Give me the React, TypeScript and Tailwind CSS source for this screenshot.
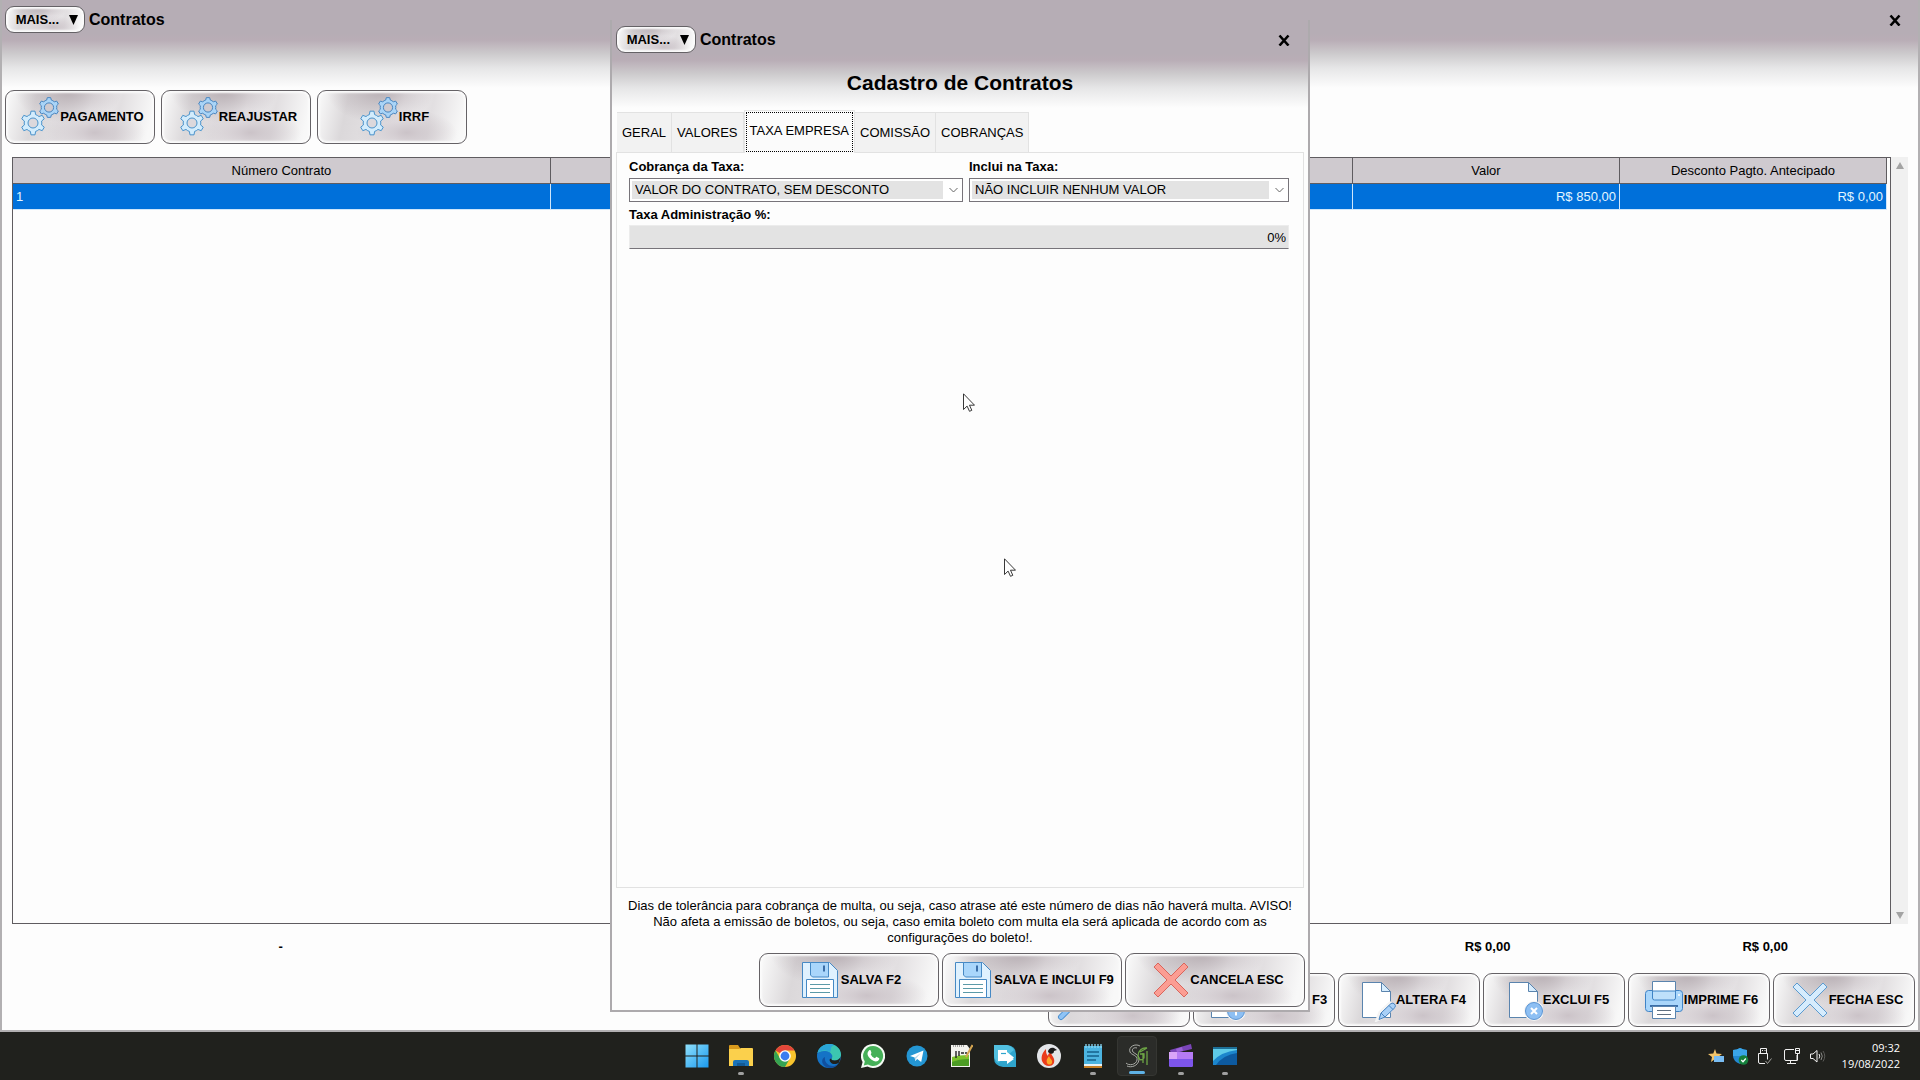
import { useState } from 'react'
import type { ReactNode } from 'react'

const silver =
  'bg-[radial-gradient(ellipse_at_42%_0%,#b8afb4_0%,transparent_44%),radial-gradient(ellipse_at_60%_80%,#cbc3c8_0%,transparent_40%),linear-gradient(102deg,#f8f8f8_2%,#dbd8da_20%,#e2dfe1_38%,#f0eef0_55%,#e2dfe1_74%,#f8f8f8_95%)]'

const headerFade =
  'bg-[linear-gradient(#b6adb5_0px,#b6adb5_34px,#b9adb6_40px,#cdcbcd_54px,#e6e6e7_68px,#fdfdfd_88px)]'

function gear(cx: number, cy: number, outer: number, inner: number) {
  const teeth = 6
  const pts: string[] = []
  for (let i = 0; i < teeth; i++) {
    const mid = (i / teeth) * Math.PI * 2 - Math.PI / 2
    const corners = [
      [-0.3, inner],
      [-0.17, outer],
      [0.17, outer],
      [0.3, inner],
      [0.52, inner],
    ]
    corners.forEach(([a, r]) => {
      pts.push(`${(cx + Math.cos(mid + a) * r).toFixed(2)},${(cy + Math.sin(mid + a) * r).toFixed(2)}`)
    })
  }
  return pts.join(' ')
}

function Icon({ children }: { children?: ReactNode }) {
  return (
    <svg className="size-11 shrink-0" viewBox="0 0 44 44" fill="none" aria-hidden="true">
      {children}
    </svg>
  )
}

function GearsIcon() {
  return (
    <Icon>
      <polygon points={gear(17, 28, 12, 8.8)} fill="#d3ecfc" stroke="#4a93cc" strokeLinejoin="round" />
      <circle cx="17" cy="28" r="5" fill="#dcd8dc" stroke="#4a93cc" />
      <polygon points={gear(33, 12.5, 10, 7.8)} fill="#a9d4f7" stroke="#4a86c0" strokeLinejoin="round" />
      <circle cx="33" cy="12.5" r="4.6" fill="#cfcacf" stroke="#4a86c0" />
    </Icon>
  )
}

function FloppyIcon() {
  return (
    <Icon>
      <path d="M5.500 4.500h27l8 8v27h-35z" fill="#dff1fe" stroke="#4689c4" />
      <path d="M13.500 4.500h18v14.500h-16l-2-2z" fill="#a9d6fb" stroke="#4689c4" />
      <path d="M27 7.500v6" stroke="#3b6ea8" strokeWidth="2" />
      <path d="M9.500 39.500v-18h27v18z" fill="#fff" stroke="#4689c4" />
      <path d="M13 26.500h20M13 30.500h20M13 34.500h20" stroke="#5b9aa8" />
    </Icon>
  )
}

function CrossIcon({ fill, stroke }: { fill: string; stroke: string }) {
  return (
    <Icon>
      <path
        d="M12 5L25 18 38 5l4 4L29 22 42 35l-4 4L25 26 12 39l-4-4L21 22 8 9z"
        fill={fill}
        stroke={stroke}
      />
    </Icon>
  )
}

function Sheet() {
  return (
    <>
      <path d="M10.500 4.500h19l9 9v26h-28z" fill="#fff" stroke="#5a84ae" />
      <path d="M29.500 4.500v9h9z" fill="#d8edfd" stroke="#5a84ae" />
    </>
  )
}

function EditIcon() {
  return (
    <Icon>
      <Sheet />
      <path d="M25 42l3-8L38 25l4 4-10 9.500z" fill="#a9d0f7" stroke="#f4f4f4" strokeWidth="3" />
      <path d="M27 41.500l2-6.500 10-9.500q2-1 3.500.5t.5 3.500L33 39z" fill="#a9d0f7" stroke="#4680bd" />
      <path d="M29 35l4 4M37 27.500l4 4" stroke="#4680bd" />
    </Icon>
  )
}

function BadgeIcon({ plus }: { plus?: boolean }) {
  return (
    <Icon>
      <Sheet />
      <circle cx="35" cy="33" r="9" fill="#86baf1" stroke="#f4f4f4" strokeWidth="2" />
      <circle cx="35" cy="33" r="8.500" fill="#8dbff3" stroke="#5a94d3" />
      <path
        d={plus ? 'M35 28.500v9M30.500 33h9' : 'M32 30l6 6M38 30l-6 6'}
        stroke="#fff"
        strokeWidth="2"
      />
    </Icon>
  )
}

function SearchIcon() {
  return (
    <Icon>
      <path d="M20 26L7 39" stroke="#4a8fd0" strokeWidth="6" strokeLinecap="round" />
      <path d="M20 26L7 39" stroke="#8fc3f5" strokeWidth="4" strokeLinecap="round" />
      <circle cx="28" cy="17" r="11" fill="#e4f3fe" stroke="#4a8fd0" strokeWidth="2" />
    </Icon>
  )
}

function PrinterIcon() {
  return (
    <Icon>
      <rect x="5.500" y="12.500" width="37" height="21" rx="3" fill="#a9d6fb" stroke="#3f83c6" />
      <path d="M12.500 3.500h23v10h-23z" fill="#fff" stroke="#5a84ae" />
      <path d="M12.500 13v7q0 2 2 2h19q2 0 2-2v-7z" fill="#bfe0fb" stroke="#3f83c6" />
      <path d="M10 28h28" stroke="#3b6ea8" strokeWidth="2" />
      <path d="M12.500 28.500h23v12h-23z" fill="#fff" stroke="#5a84ae" />
      <path d="M17 32.500h14M17 36.500h14" stroke="#5f6f80" />
      <circle cx="39" cy="17" r="1" fill="#fff" />
    </Icon>
  )
}

function ActionButton({ icon, label, size }: { icon: ReactNode; label: string; size: string }) {
  return (
    <button
      type="button"
      className={`${size} ${silver} flex h-[54px] items-center justify-center whitespace-nowrap rounded-[9px] border border-[#656266] text-[13px] font-bold leading-4 text-black shadow-[inset_0_0_2px_2px_#fbfbfb]`}
    >
      {icon}
      <span>{label}</span>
    </button>
  )
}

function TitleBar() {
  return (
    <div className="flex h-[38px] shrink-0 items-start justify-between pr-2 pt-[6px]">
      <div className="flex items-center gap-1">
        <button
          type="button"
          className={`${silver} flex h-[27px] w-20 items-center justify-end gap-[10px] rounded-[9px] border border-[#656266] pr-[6px] text-[13px] font-bold leading-4 shadow-[inset_0_0_2px_2px_#fbfbfb]`}
        >
          MAIS...
          <svg className="h-[10px] w-[9px]" viewBox="0 0 9 10" aria-hidden="true">
            <path d="M0 0h9L4.500 10z" fill="#000" />
          </svg>
        </button>
        <span className="text-base font-bold leading-5">Contratos</span>
      </div>
      <button type="button" aria-label="Fechar" className="flex h-7 w-6 items-center justify-center">
        <svg className="size-3" viewBox="0 0 12 12" fill="none" stroke="#000" strokeWidth="2.600">
          <path d="M1.500 1.500l9 10M10.500 1.500l-9 10" />
        </svg>
      </button>
    </div>
  )
}

const toolbar = ['PAGAMENTO', 'REAJUSTAR', 'IRRF']

const actions = [
  { label: 'PESQUISA F2', icon: <SearchIcon /> },
  { label: 'ADICIONA F3', icon: <BadgeIcon plus /> },
  { label: 'ALTERA F4', icon: <EditIcon /> },
  { label: 'EXCLUI F5', icon: <BadgeIcon /> },
  { label: 'IMPRIME F6', icon: <PrinterIcon /> },
  { label: 'FECHA ESC', icon: <CrossIcon fill="#d6ecfd" stroke="#5b9bd0" /> },
]

const th = 'border-b border-r border-[#5f5c60] font-normal'
const td = 'border-b border-r border-[#cfe6fb]'

function ContractsWindow() {
  return (
    <main
      className={`${headerFade} flex min-h-0 flex-1 flex-col border-x-2 border-b-2 border-[#b2b0b2] px-[3px] pb-[3px]`}
    >
      <TitleBar />
      <div className="mt-[52px] flex shrink-0 gap-[6px]">
        {toolbar.map((t) => (
          <ActionButton key={t} label={t} icon={<GearsIcon />} size="w-[150px]" />
        ))}
      </div>

      <div className="mx-[7px] mt-[13px] flex min-h-0 flex-1">
        <div className="min-w-0 flex-1 border border-[#5f5c60] pr-[3px]">
          <table className="w-full table-fixed border-separate border-spacing-0 text-[13px] leading-4">
            <colgroup>
              <col className="w-[28.7%]" />
              <col />
              <col className="w-[14.25%]" />
              <col className="w-[14.25%]" />
            </colgroup>
            <thead>
              <tr className="h-[26px] bg-[#cfcacf]">
                <th className={th}>Número Contrato</th>
                <th className={th} />
                <th className={th}>Valor</th>
                <th className={th}>Desconto Pagto. Antecipado</th>
              </tr>
            </thead>
            <tbody>
              <tr className="h-[26px] bg-[#0070da] text-[#e4f6ff]">
                <td className={`${td} pl-[3px]`}>1</td>
                <td className={td} />
                <td className={`${td} pr-[3px] text-right`}>R$ 850,00</td>
                <td className={`${td} pr-[3px] text-right`}>R$ 0,00</td>
              </tr>
            </tbody>
          </table>
        </div>
        <div className="flex w-[17px] flex-col items-center justify-between bg-[#f0f0f0] py-[5px]">
          <svg className="h-[7px] w-2" viewBox="0 0 8 7" aria-hidden="true">
            <path d="M4 0l4 7H0z" fill="#a3a3a3" />
          </svg>
          <svg className="h-[7px] w-2" viewBox="0 0 8 7" aria-hidden="true">
            <path d="M4 7L0 0h8z" fill="#a3a3a3" />
          </svg>
        </div>
      </div>

      <div className="mx-[6px] grid h-[49px] shrink-0 grid-cols-[538fr_802fr_267fr_287fr] pt-[15px] text-center text-[13px] font-bold leading-4">
        <span>-</span>
        <span />
        <span>R$ 0,00</span>
        <span>R$ 0,00</span>
      </div>

      <div className="flex shrink-0 justify-end gap-[3px]">
        {actions.map((a) => (
          <ActionButton key={a.label} label={a.label} icon={a.icon} size="w-[142px]" />
        ))}
      </div>
    </main>
  )
}

function SelectBox({ id, label, value }: { id: string; label: string; value: string }) {
  return (
    <div>
      <label htmlFor={id} className="block text-[13px] font-bold leading-5">
        {label}
      </label>
      <div className="relative mt-px border border-[#77747a] bg-white py-[2px] pl-[2px] pr-[19px]">
        <select
          id={id}
          defaultValue={value}
          className="block h-[18px] w-full appearance-none bg-[#e3e3e3] pl-[3px] text-[13px] leading-[18px] outline-none"
        >
          <option value={value}>{value}</option>
        </select>
        <svg
          className="pointer-events-none absolute right-1 top-2 h-[6px] w-[9px]"
          viewBox="0 0 9 6"
          fill="none"
          stroke="#666"
        >
          <path d="M.5 1l4 4 4-4" />
        </svg>
      </div>
    </div>
  )
}

function Pointer({ place }: { place: string }) {
  return (
    <svg className={`absolute ${place} h-[19px] w-3`} viewBox="0 0 12 19" aria-hidden="true">
      <path
        d="M.5.8v15.700l3.600-3.400 2.400 5.200 2.300-1-2.300-5.100h5z"
        fill="#fff"
        stroke="#222"
        strokeWidth=".9"
      />
    </svg>
  )
}

const tabs = ['GERAL', 'VALORES', 'TAXA EMPRESA', 'COMISSÃO', 'COBRANÇAS']

function ContractDialog() {
  const [active, setActive] = useState('TAXA EMPRESA')

  return (
    <section
      role="dialog"
      aria-label="Cadastro de Contratos"
      className={`${headerFade} absolute inset-x-0 bottom-[68px] top-5 mx-auto flex w-[700px] max-w-full flex-col border-x-2 border-b-2 border-[#adaaad] bg-[#fdfdfd] px-1 pb-[3px]`}
    >
      <TitleBar />
      <h1 className="text-center text-[21px] font-bold leading-[49px]">Cadastro de Contratos</h1>

      <div role="tablist" className="flex h-[45px] shrink-0 items-end pl-px text-[13px] leading-4">
        {tabs.map((t) => (
          <button
            key={t}
            type="button"
            role="tab"
            aria-selected={t === active}
            onClick={() => setActive(t)}
            className={
              t === active
                ? 'relative top-px h-[43px] border border-b-0 border-[#e6e6e6] bg-[#fbfbfb] p-px'
                : 'h-10 border-r border-t border-[#e2e2e2] bg-[#f2f2f2] px-[5px]'
            }
          >
            {t === active ? (
              <span className="flex h-full items-center border border-dotted border-black px-[3px] pb-[2px]">{t}</span>
            ) : (
              t
            )}
          </button>
        ))}
      </div>

      <div className="min-h-0 flex-1 border border-[#e2e2e2] pl-3 pr-[14px] pt-1">
        <div className="grid grid-cols-[334fr_320fr] gap-[6px]">
          <SelectBox id="cobranca" label="Cobrança da Taxa:" value="VALOR DO CONTRATO, SEM DESCONTO" />
          <SelectBox id="inclui" label="Inclui na Taxa:" value="NÃO INCLUIR NENHUM VALOR" />
        </div>
        <label htmlFor="taxa" className="mt-[3px] block text-[13px] font-bold leading-5">
          Taxa Administração %:
        </label>
        <input
          id="taxa"
          defaultValue="0%"
          className="block h-6 w-full border border-[#ececec] border-b-[#77747a] bg-[#e3e3e3] pr-[2px] text-right text-[13px] leading-4 outline-none"
        />
      </div>

      <p className="shrink-0 px-2 pb-[7px] pt-[10px] text-center text-[13px] leading-4">
        Dias de tolerância para cobrança de multa, ou seja, caso atrase até este número de dias não haverá multa. AVISO!
        Não afeta a emissão de boletos, ou seja, caso emita boleto com multa ela será aplicada de acordo com as
        configurações do boleto!.
      </p>

      <div className="-mr-px flex shrink-0 justify-end gap-[3px]">
        <ActionButton label="SALVA F2" icon={<FloppyIcon />} size="w-[180px]" />
        <ActionButton label="SALVA E INCLUI F9" icon={<FloppyIcon />} size="w-[180px]" />
        <ActionButton
          label="CANCELA ESC"
          icon={<CrossIcon fill="#fb9d93" stroke="#d9655b" />}
          size="w-[180px]"
        />
      </div>

      <Pointer place="left-[351px] top-[373px]" />
      <Pointer place="left-[392px] top-[538px]" />
    </section>
  )
}

const apps: { name: string; state?: 'open' | 'active'; art: ReactNode }[] = [
  {
    name: 'Iniciar',
    art: (
      <>
        <defs>
          <linearGradient id="win" x1="0" y1="0" x2="1" y2="1">
            <stop offset="0" stopColor="#8fe0fb" />
            <stop offset="1" stopColor="#1a9af0" />
          </linearGradient>
        </defs>
        <path d="M.5.5h11v11H.5zM12.500.5h11v11h-11zM.5 12.500h11v11H.5zM12.500 12.500h11v11h-11z" fill="url(#win)" />
      </>
    ),
  },
  {
    name: 'Explorador de Arquivos',
    state: 'open',
    art: (
      <>
        <path d="M0 2q0-1 1-1h8l2 3v6H0z" fill="#d99a1c" />
        <path d="M0 5h10l2-1h11q1 0 1 1v17H0z" fill="#fbd04c" />
        <path d="M4 22v-4q0-2 2-2h12q2 0 2 2v4z" fill="#1a72b8" />
        <path d="M8 22v-3h8v3z" fill="#135a96" />
      </>
    ),
  },
  {
    name: 'Chrome',
    art: (
      <>
        <circle cx="12" cy="12" r="11" fill="#f9c52d" />
        <path d="M12 12L2.470 6.500A11 11 0 0 1 21.530 6.500H12z" fill="#e2463a" />
        <path d="M2.470 6.500A11 11 0 0 0 12 23l4.700-8.200L12 12 7.300 14.800z" fill="#35a453" />
        <circle cx="12" cy="12" r="5.800" fill="#fff" />
        <circle cx="12" cy="12" r="4.400" fill="#3a7df0" />
      </>
    ),
  },
  {
    name: 'Edge',
    art: (
      <>
        <circle cx="12" cy="12" r="12" fill="#1573c6" />
        <path d="M.5 9C2 3.500 6.500 0 12 0c7 0 12 5 12 10.500 0 4-3 6-6.500 6-2.500 0-3.500-1-3-2 1-1 1-2.500.5-3.500C13.500 7.500 10 6.500 7 7 4 7.300 1.500 8 .5 9z" fill="#3cc6b0" />
        <path d="M.5 9C2 3.500 6.500 0 12 0c2 0 4 .5 5.500 1.300C12 2 15 7 13 8 9 5.500 3 6 .5 9z" fill="#2aa6d8" />
        <path d="M8 13c-1 5 3 9 8 9 2.500 0 4-1 5.500-2.500C19 24 13 25 9 23c-5-3-5-8-1-10z" fill="#114f9e" />
        <path d="M24 12c-1 3-4 4.500-6.500 4.500-2.500 0-3.500-1-3-2-1.500 0-2.500 1-1.500 3 1.500 3 6 3.500 9 1z" fill="#20211d" />
      </>
    ),
  },
  {
    name: 'WhatsApp',
    art: (
      <>
        <path d="M12 0a12 12 0 1 1-5.500 22.600L0 24l1.600-6A12 12 0 0 1 12 0z" fill="#f4faf4" />
        <path d="M12 2a10 10 0 1 1-5 18.600L2.800 21.500l1-4A10 10 0 0 1 12 2z" fill="#45b058" />
        <path d="M8 6.500c1-.8 1.500-.3 2 1 .7 1.600.5 1.700-.3 2.800 1 2 2 3 4.200 4 1-1 1.300-1.800 2-1.400 2.600 1.200 2.700 1.300 2.200 2.600-.8 1.900-3.300 2.300-5.200 1.500C9.500 15.700 7.600 13.300 6.700 11 6.200 9.300 6.800 7.500 8 6.500z" fill="#fff" />
      </>
    ),
  },
  {
    name: 'Telegram',
    art: (
      <>
        <circle cx="12" cy="12" r="10.500" fill="#2496d3" />
        <path d="M5 12l13.500-5.500-2.300 11.500-4-3-2 2-.5-3.500z" fill="#fff" />
        <path d="M9.700 13.500l6-4.500-4.500 5.500-1 2.500z" fill="#b9d9ec" />
      </>
    ),
  },
  {
    name: 'Notepad++',
    art: (
      <>
        <path d="M2 1h16l3 4v18H2z" fill="#f3f3ee" />
        <path d="M3 13q6-2 17-2v11H3z" fill="#7cc32c" />
        <path d="M3 18q7-3 17-3v7H3z" fill="#4c9c24" />
        <path d="M7 7v7M10 7v5M12 9h3M16 9h2" stroke="#222" strokeWidth="1.400" />
        <path d="M23.500 1L17 13" stroke="#d3a450" strokeWidth="2" />
        <path d="M4 2h12" stroke="#555" strokeDasharray="1 1" />
      </>
    ),
  },
  {
    name: 'TeamShare',
    art: (
      <>
        <path d="M1 1h13q9 1 9 9v13H10Q1 22 1 14z" fill="#2fa5cd" />
        <path d="M1 1h13q5 1 7 5L5 19Q1 16 1 10z" fill="#52c0e0" />
        <path d="M5 6h9v4H8v4h6v-3l7 4-7 5v-3H5z" fill="#fff" />
        <path d="M8 10h6V8l7 5.500-7 5V16H8z" fill="#fff" />
        <path d="M8 9.500h5" stroke="#2fa5cd" strokeWidth="1.200" />
      </>
    ),
  },
  {
    name: 'Firebird',
    art: (
      <>
        <circle cx="12" cy="12" r="12" fill="#e3e5e8" />
        <path d="M9 5c-4 4-5 8-4 12 1 3 4 5 7 5 4 0 6-3 5-7-1-3-3-4-3-7-2 1-3 2-3 4-2-2-2-4-2-7z" fill="#ea3c1c" />
        <path d="M12 12c-2 3-3 4-2 7 1 2 4 2 5 0 1-3-2-4-3-7z" fill="#fba829" />
        <path d="M11 8c0-3 3-5 6-4l3 2-3 1c0 3-3 4-6 1z" fill="#1a1a1a" />
      </>
    ),
  },
  {
    name: 'Bloco de Notas',
    state: 'open',
    art: (
      <>
        <path d="M3 2h18v18H3z" fill="#4cb4e0" />
        <path d="M3 20h18v2H3z" fill="#e8f2f6" />
        <path d="M3 22h18v2H3z" fill="#c77f24" />
        <path d="M5 0v4M8 0v4M11 0v4M14 0v4M17 0v4M20 0v4" stroke="#8ad6f2" strokeWidth="1.300" />
        <path d="M6 8h12M6 12h12M6 16h9" stroke="#14608a" strokeWidth="1.600" />
      </>
    ),
  },
  {
    name: 'Sistema',
    state: 'active',
    art: (
      <>
        <path d="M15 2C10-1 3 3 5 8c1 3 8 3 7 8-1 5-8 6-11 3M12 4C9 3 6 5 8 8c2 2 7 3 6 8-1 6-8 8-12 6" stroke="#a9aba6" strokeWidth="1" fill="none" />
        <path d="M22 4c-5-1-9 3-9 8 0 4 4 5 6 2v-4h-4M22 7v14M18 9v10M15 8l7-4" stroke="#6da545" strokeWidth="1.300" fill="none" />
      </>
    ),
  },
  {
    name: 'Clipchamp',
    state: 'open',
    art: (
      <>
        <path d="M1 6L22 0l1 5L2 10z" fill="#7a45b8" />
        <path d="M7 5l6-2 1 4-6 1z" fill="#9b63d8" />
        <path d="M0 8h24v13q0 2-2 2H2q-2 0-2-2z" fill="#b57bf4" />
        <path d="M0 15h24v6q0 2-2 2H2q-2 0-2-2z" fill="#7d55ec" />
        <path d="M0 8h8v7H0z" fill="#d9a5f8" />
      </>
    ),
  },
  {
    name: 'Área de Trabalho Remota',
    state: 'open',
    art: (
      <>
        <path d="M0 3h24v18H0z" fill="#1c86cc" />
        <path d="M0 3h24v3Q8 8 0 17z" fill="#5ecbe8" />
        <path d="M3 21Q10 11 24 9v12z" fill="#0d5aa0" />
        <path d="M0 3h24v2H0z" fill="#1d6f96" />
      </>
    ),
  },
]

const marks = {
  open: 'h-[3px] w-[6px] bg-[#a0a0a0]',
  active: 'h-[3px] w-4 bg-[#5fb2e6]',
}

function Taskbar() {
  return (
    <footer className="relative flex h-12 shrink-0 items-center justify-center bg-[#20211d]">
      <nav className="flex gap-1 pl-[2px]">
        {apps.map((app) => (
          <button
            key={app.name}
            type="button"
            aria-label={app.name}
            className={`relative flex size-10 items-center justify-center rounded ${
              app.state === 'active' ? 'border border-[#353632] bg-[#2b2c29]' : ''
            }`}
          >
            <svg className="size-6" viewBox="0 0 24 24" fill="none">
              {app.art}
            </svg>
            {app.state && <span className={`absolute bottom-px rounded-full ${marks[app.state]}`} />}
          </button>
        ))}
      </nav>

      <div className="absolute inset-y-0 right-5 flex items-center gap-4">
        <div className="flex items-center gap-2">
          <svg className="size-4" viewBox="0 0 16 16" fill="none">
            <path d="M7 1l1.500 4.500L14 6l-4 3 1 5-4-3-4 3 1-5-4-3 5.300-.5z" fill="#f2c469" />
            <path d="M6 8h10v6H6z" fill="#79bdf3" />
          </svg>
          <svg className="size-[17px]" viewBox="0 0 17 17" fill="none">
            <path d="M8 0q4 2 7 2v6q0 5-7 8Q1 13 1 8V2q4 0 7-2z" fill="#2388d1" />
            <path d="M8 0q4 2 7 2v6H1V2q4 0 7-2z" fill="#3aa5e8" />
            <circle cx="11.500" cy="12" r="4.800" fill="#15803c" />
            <path d="M9.300 12l1.700 1.700 2.800-3.200" stroke="#fff" strokeWidth="1.300" />
          </svg>
          <svg className="h-[18px] w-4" viewBox="0 0 16 18" fill="none" stroke="#f0f0f0">
            <path d="M3.500 6.500v-5h6v5M5 3.500h1M7.500 3.500h1" />
            <path d="M8 16.500H3q-1.500 0-1.500-1.500V6.500h9v6" />
            <path d="M8.500 14l2 2.500 4-5" stroke="#a0a09c" />
          </svg>
          <svg className="ml-[2px] h-[18px] w-[18px]" viewBox="0 0 18 18" fill="none" stroke="#f0f0f0">
            <path d="M11 2.500H3Q1.500 2.500 1.500 4v8q0 1.500 1.500 1.500h11V8" />
            <path d="M7.500 14v2M4 16.500h9M12.500 1.500h4v5h-4zM14.500 6.500v7M13 3.500h3" />
          </svg>
          <svg className="h-4 w-[17px]" viewBox="0 0 17 16" fill="none" stroke="#f0f0f0">
            <path d="M1.500 6v4.500h2.500l4 3.500V2.500L4 6z" />
            <path d="M10 6q1.500 2 0 4.500" />
            <path d="M12 4.500q2.500 3.500 0 7.500" stroke="#8b8b88" />
            <path d="M14 3q3.500 5 0 10.500" stroke="#5a5a57" />
          </svg>
        </div>
        <div className="text-right font-['Open_Sans',sans-serif] text-[11px] leading-4 text-white">
          <div>09:32</div>
          <div>19/08/2022</div>
        </div>
      </div>
    </footer>
  )
}

export default function App() {
  return (
    <div className="relative flex h-screen flex-col overflow-hidden bg-[#fdfdfd] font-['Liberation_Sans',Arial,sans-serif] text-black">
      <ContractsWindow />
      <ContractDialog />
      <Taskbar />
    </div>
  )
}
